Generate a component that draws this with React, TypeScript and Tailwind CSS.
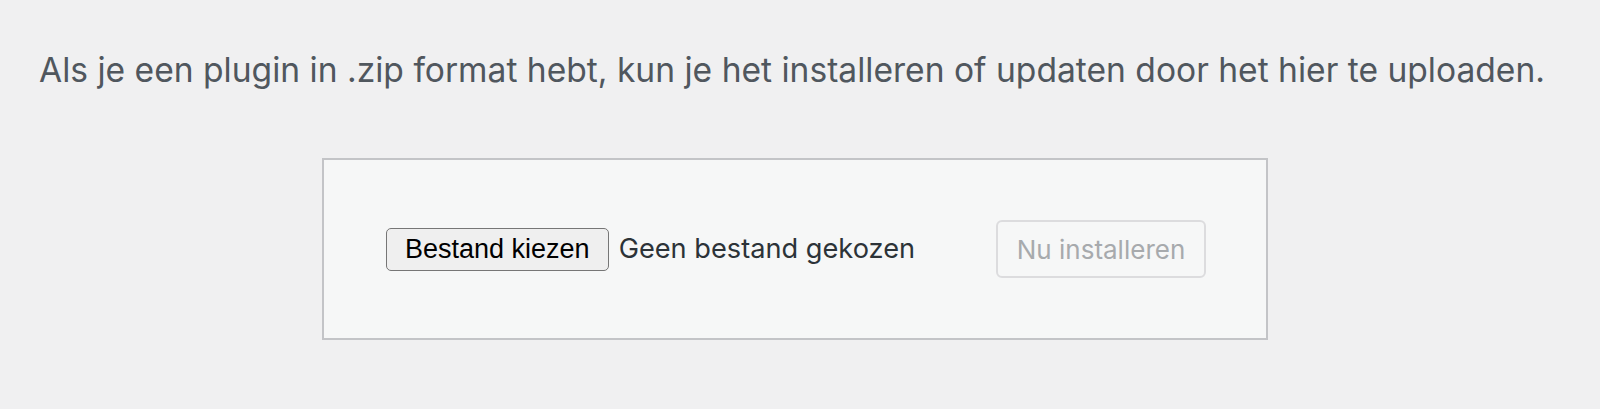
import React from 'react';

// Plugin upload form (WordPress style)
const App: React.FC = () => {
  return (
    <div className="w-[1600px] h-[409px] bg-[#f0f0f1] overflow-hidden" style={{ fontFamily: 'Inter, "Noto Sans", sans-serif' }}>
      <p className="pl-[39px] pt-[50px] text-[33.6px] leading-[40px] text-[#50575e]">
        Als je een plugin in .zip format hebt, kun je het installeren of updaten door het hier te uploaden.
      </p>

      <div className="ml-[322px] mt-[68px] w-[946px] h-[182px] border-2 border-[#c3c4c7] bg-[#f6f7f7] flex items-center justify-between pl-[62px] pr-[60px]">
        <div className="flex items-center">
          <button className="h-[43px] px-[18px] rounded-[5px] border border-[#767676] bg-[#efefef] text-black text-[27px] font-['Liberation_Sans',Arial,sans-serif]">
            Bestand kiezen
          </button>
          <span className="ml-[10px] text-[27.2px] text-[#2c3338]">Geen bestand gekozen</span>
        </div>
        <button
          disabled
          className="h-[58px] w-[210px] rounded-[6px] border-2 border-[#dcdcde] bg-[#f6f7f7] text-[26px] text-[#a7aaad]"
        >
          Nu installeren
        </button>
      </div>
    </div>
  );
};

export default App;
